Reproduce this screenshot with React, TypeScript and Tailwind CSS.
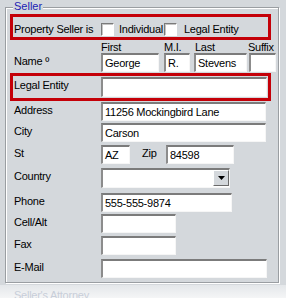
const FIELD =
  "h-[19px] shrink-0 bg-white border-t-2 border-l-2 border-b border-r border-t-[#7b7b7b] border-l-[#8c8c8c] border-b-[#f6f6f6] border-r-[#f6f6f6] pl-[2px] text-[11px] leading-[16px] text-black whitespace-nowrap overflow-hidden";

function Field({ value = "", className = "" }: { value?: string; className?: string }) {
  return <div className={`${FIELD} ${className}`}>{value}</div>;
}

function CheckBox() {
  return (
    <div className="h-[13px] w-[13px] shrink-0 border border-t-[#7a7a7a] border-l-[#7a7a7a] border-b-white border-r-white bg-white shadow-[inset_1px_1px_0_#c4c4c4]" />
  );
}

function Row({ label, mt, children }: { label: string; mt: string; children: React.ReactNode }) {
  return (
    <div className={`flex items-start pl-[4px] ${mt}`}>
      <span className="w-[87px] shrink-0 leading-[13px] pt-[2px]">{label}</span>
      {children}
    </div>
  );
}

export default function App() {
  return (
    <div className="flex h-[298px] w-[286px] flex-col overflow-hidden bg-[#d4d8dc] font-['Liberation_Sans',Arial,sans-serif] text-[11px] tracking-[-0.25px] text-black">
      <div className="relative ml-[5px] mt-[7px] h-[276px] w-[274px] shrink-0 border border-[#9a9ea2] shadow-[inset_1px_1px_0_#ffffff,1px_1px_0_#ffffff]">
        <span className="absolute left-[7px] top-[-8px] bg-[#d4d8dc] px-[1px] leading-[13px] tracking-normal text-[#1c22b4]">Seller</span>

        <div className="pl-[4px]">
          <div className="mt-[6px] flex h-[26px] w-[261px] items-center border-[3px] border-[#c40008] pl-[1px] pt-[4px]">
            <span className="w-[87px] shrink-0 leading-[13px]">Property Seller is</span>
            <CheckBox />
            <span className="ml-[5px] w-[45px] leading-[13px]">Individual</span>
            <CheckBox />
            <span className="ml-[7px] leading-[13px]">Legal Entity</span>
          </div>

          <div className="flex pl-[4px] pt-[1px]">
            <span className="w-[87px] shrink-0 pt-[14px] leading-[13px]">Name º</span>
            <div className="flex flex-col">
              <span className="h-[12px] leading-[12px]">First</span>
              <Field value="George" className="w-[58px]" />
            </div>
            <div className="ml-[5px] flex flex-col">
              <span className="h-[12px] leading-[12px]">M.I.</span>
              <Field value="R." className="w-[26px]" />
            </div>
            <div className="ml-[4px] flex flex-col">
              <span className="h-[12px] pl-[1px] leading-[12px]">Last</span>
              <Field value="Stevens" className="w-[53px]" />
            </div>
            <div className="ml-[2px] flex flex-col">
              <span className="-ml-[1px] h-[12px] leading-[12px]">Suffix</span>
              <Field className="w-[27px]" />
            </div>
          </div>

          <div className="mt-[1px] flex h-[28px] w-[261px] items-center border-[3px] border-[#c40008] pl-[1px]">
            <span className="w-[87px] shrink-0 self-start pt-[3px] leading-[13px]">Legal Entity</span>
            <Field className="h-[20px] w-[166px]" />
          </div>

          <Row label="Address" mt="mt-[1px]">
            <Field value="11256 Mockingbird Lane" className="w-[165px]" />
          </Row>
          <Row label="City" mt="mt-[2px]">
            <Field value="Carson" className="w-[165px]" />
          </Row>
          <Row label="St" mt="mt-[3px]">
            <Field value="AZ" className="w-[29px]" />
            <span className="ml-[12px] w-[24px] shrink-0 pt-[2px] leading-[13px]">Zip</span>
            <Field value="84598" className="w-[68px]" />
          </Row>
          <Row label="Country" mt="mt-[4px]">
            <div className="flex h-[20px] w-[129px] shrink-0 justify-end border-t-2 border-l-2 border-b border-r border-t-[#7b7b7b] border-l-[#8c8c8c] border-b-[#f6f6f6] border-r-[#f6f6f6] bg-white">
              <div className="flex h-[16px] w-[16px] items-center justify-center border border-t-white border-l-white border-b-[#6a6a6a] border-r-[#6a6a6a] bg-[#d4d8dc]">
                <svg width="7" height="4" viewBox="0 0 7 4">
                  <path d="M0 0h7L3.5 4z" fill="#000" />
                </svg>
              </div>
            </div>
          </Row>
          <Row label="Phone" mt="mt-[5px]">
            <Field value="555-555-9874" className="w-[131px]" />
          </Row>
          <Row label="Cell/Alt" mt="mt-[2px]">
            <Field className="w-[75px]" />
          </Row>
          <Row label="Fax" mt="mt-[3px]">
            <Field className="w-[75px]" />
          </Row>
          <Row label="E-Mail" mt="mt-[4px]">
            <Field className="w-[166px]" />
          </Row>
        </div>
      </div>

      <div className="mt-[2px] flex-1 bg-gradient-to-b from-[#e4e7ea] to-[#fcfcfc] pl-[14px] pt-[2px]">
        <span className="leading-[13px] text-[#c8ced9]">Seller's Attorney</span>
      </div>
    </div>
  );
}
